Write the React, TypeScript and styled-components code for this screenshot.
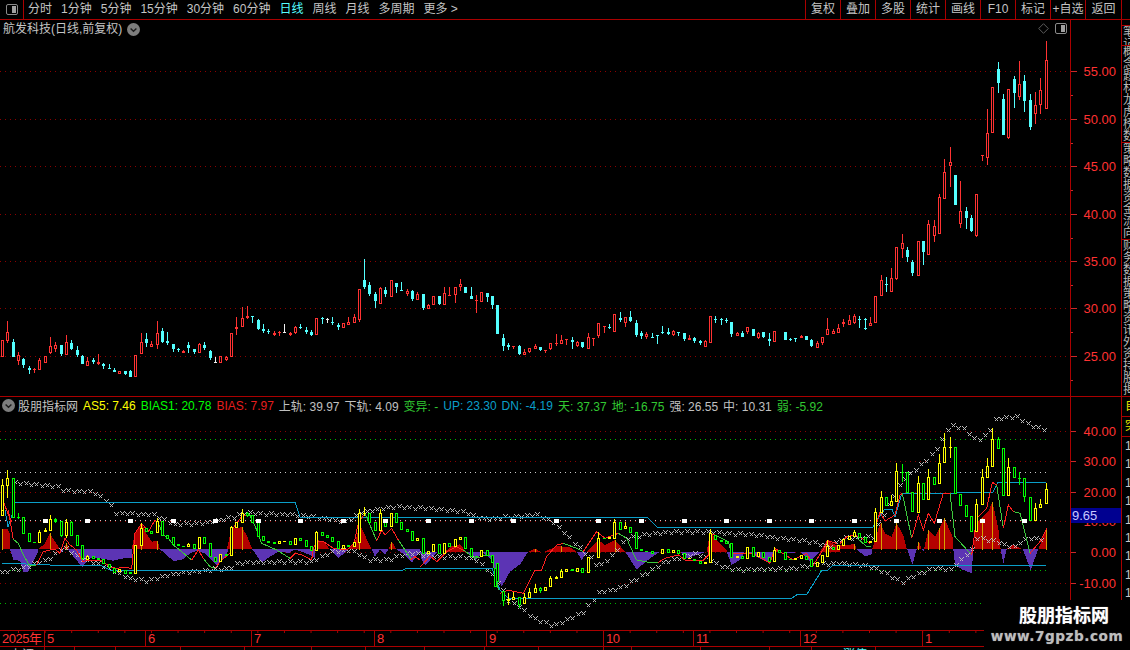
import React from "react";
import styled, { createGlobalStyle } from "styled-components";

const RED_LINE = "#aa0000";
const AXIS_RED = "#ff3232";

const Global = createGlobalStyle`
  html, body { margin: 0; padding: 0; background: #000; }
  body { font-family: "Liberation Sans", "Noto Sans CJK SC", sans-serif; font-size: 12px; color: #c0c0c0; }
`;

const Page = styled.div`
  position: relative;
  width: 1130px;
  height: 650px;
  background: #000;
  display: flex;
  flex-direction: column;
  overflow: hidden;
`;
const TopBar = styled.header`
  height: 19px;
  border-bottom: 1px solid ${RED_LINE};
  display: flex;
  align-items: center;
  flex: none;
`;
const PanelToggle = styled.div`
  width: 23px;
  height: 19px;
  border-right: 1px solid ${RED_LINE};
  display: flex;
  align-items: center;
  justify-content: center;
  flex: none;
`;
const Periods = styled.nav`
  display: flex;
  gap: 9px;
  padding-left: 4px;
  line-height: 19px;
`;
const Period = styled.span<{ $on?: boolean }>`
  color: ${(p) => (p.$on ? "#55ffff" : "#c4c4c4")};
  white-space: nowrap;
`;
const Tools = styled.div`
  display: flex;
  margin-left: auto;
  margin-right: 8px;
  border-right: 1px solid ${RED_LINE};
`;
const Tool = styled.div`
  width: 34px;
  height: 19px;
  line-height: 19px;
  text-align: center;
  border-left: 1px solid ${RED_LINE};
  color: #c4c4c4;
  white-space: nowrap;
  &:last-child { width: 35px; }
`;
const Main = styled.main`
  flex: 1;
  display: flex;
  min-height: 0;
`;
const ChartColumn = styled.section`
  width: 1070px;
  border-right: 1px solid ${RED_LINE};
  display: flex;
  flex-direction: column;
  flex: none;
`;
const Pane = styled.div<{ $h: number; $line?: boolean }>`
  position: relative;
  height: ${(p) => p.$h}px;
  flex: none;
  border-bottom: ${(p) => (p.$line ? `1px solid ${RED_LINE}` : "none")};
`;
const Drawing = styled.svg`
  display: block;
  width: 100%;
  height: 100%;
  shape-rendering: crispEdges;
`;
const AxisText = styled.text`
  font-family: "Liberation Sans", sans-serif;
  font-size: 13px;
  fill: ${AXIS_RED};
  text-anchor: end;
  shape-rendering: auto;
`;
const PaneTitle = styled.div`
  position: absolute;
  left: 3px;
  top: 1px;
  display: flex;
  align-items: center;
  gap: 5px;
  line-height: 17px;
  color: #c4c4c4;
`;
const Legend = styled.div`
  position: absolute;
  left: 2px;
  top: 0;
  display: flex;
  align-items: center;
  gap: 5px;
  height: 17px;
  white-space: nowrap;
`;
const LegendName = styled.span`
  color: #c4c4c4;
  margin-left: -2px;
`;
const LegendItem = styled.span<{ $c: string }>`
  color: ${(p) => p.$c};
`;
const CornerIcons = styled.div`
  position: absolute;
  right: 3px;
  top: 3px;
  display: flex;
  align-items: center;
  gap: 6px;
`;
const TimeAxis = styled.div`
  height: 15px;
  flex: none;
  display: flex;
  border-top: 1px solid ${RED_LINE};
  border-bottom: 1px solid ${RED_LINE};
  background-image: linear-gradient(90deg, ${RED_LINE} 1px, transparent 1px);
  background-size: 26.6px 2px;
  background-repeat: repeat-x;
  background-position: 18px 0;
`;
const TimeCell = styled.div<{ $w: number }>`
  width: ${(p) => p.$w}px;
  flex: none;
  padding-left: 2px;
  box-sizing: border-box;
  border-right: 1px solid ${RED_LINE};
  color: ${AXIS_RED};
  font-size: 13px;
  letter-spacing: -0.5px;
  line-height: 16px;
  white-space: nowrap;
`;
const StatusBar = styled.div`
  flex: 1;
  display: flex;
  overflow: hidden;
`;
const StatusCell = styled.div<{ $w: number; $c?: string }>`
  width: ${(p) => p.$w}px;
  flex: none;
  box-sizing: border-box;
  border-right: 1px solid ${RED_LINE};
  color: ${(p) => p.$c || "#c4c4c4"};
  text-align: ${(p) => (p.$c ? "right" : "center")};
  line-height: 14px;
  padding-top: 1px;
  padding-right: ${(p) => (p.$c ? "8px" : "0")};
  white-space: nowrap;
  overflow: hidden;
`;
const AxisColumn = styled.aside`
  width: 50px;
  flex: none;
  display: flex;
  flex-direction: column;
  border-right: 1px solid ${RED_LINE};
`;
const CurrentValue = styled.div`
  position: absolute;
  left: 0;
  right: 0;
  top: 111px;
  height: 15px;
  background: #000090;
  color: #c8c8ff;
  font-size: 13px;
  line-height: 15px;
  padding-left: 1px;
`;
const SideStrip = styled.aside`
  flex: 1;
  min-width: 0;
  overflow: hidden;
  display: flex;
  flex-direction: column;
`;
const StripSection = styled.div<{ $h: number; $line?: boolean }>`
  height: ${(p) => p.$h}px;
  flex: none;
  overflow: hidden;
  line-height: 12px;
  color: #b8b8b8;
  white-space: pre-line;
  padding-left: 1px;
  box-sizing: content-box;
  border-bottom: ${(p) => (p.$line ? `1px solid ${RED_LINE}` : "none")};
  margin-right: -8px;
  width: 20px;
`;
const StripBadge = styled.div`
  height: 19px;
  line-height: 19px;
  color: #e6e600;
  padding-left: 3px;
  width: 20px;
  border-bottom: 1px solid ${RED_LINE};
  flex: none;
`;
const StripRow = styled.div`
  height: 18.4px;
  line-height: 18.4px;
  width: 20px;
  padding-left: 3px;
  color: #c8c8c8;
  flex: none;
`;
const Watermark = styled.div`
  position: absolute;
  right: 0;
  bottom: 0;
  width: 146px;
  height: 50px;
  background: #000;
  display: flex;
  flex-direction: column;
  align-items: center;
  padding-top: 2px;
  box-sizing: border-box;
`;
const WatermarkTitle = styled.div`
  color: #fff;
  font: bold 18px/24px "Noto Sans CJK SC", sans-serif;
  margin-left: 14px;
  text-shadow: 0 0 1px #999;
`;
const WatermarkUrl = styled.div`
  color: #bdbdbd;
  font: bold 13.6px/20px "DejaVu Sans", sans-serif;
  letter-spacing: 0.55px;
  text-shadow: 0 0 1px #777;
  white-space: nowrap;
`;

/* ---------- icons ---------- */
const PanelIcon = () => (
  <svg width="12" height="11" viewBox="0 0 12 11">
    <rect x="0.5" y="0.5" width="11" height="10" rx="1.5" fill="#000" stroke="#8a8a8a" />
    <rect x="6" y="2" width="4" height="7" fill="#a0a0a0" />
  </svg>
);
const DiamondIcon = () => (
  <svg width="11" height="11" viewBox="0 0 11 11">
    <path d="M5.5 0.7 L10.3 5.5 L5.5 10.3 L0.7 5.5 Z" fill="none" stroke="#5c5c5c" />
  </svg>
);
const DownBadge = () => (
  <svg width="13" height="13" viewBox="0 0 13 13">
    <circle cx="6.5" cy="6.5" r="6.5" fill="#7d7d7d" />
    <path d="M3.6 5.4 L6.5 8.2 L9.4 5.4" fill="none" stroke="#1c1c1c" strokeWidth="1.4" />
  </svg>
);

/* ---------- chart data (read off the picture) ---------- */
type Candle = { x: number; h: number; t: number; b: number; l: number; k: string };

const parsePrice = (ox: number, oy: number, s: string): Candle[] =>
  s.trim().split(/\s*;\s*/).filter(Boolean).map((r) => {
    const [x, h, t, b, l, k] = r.trim().split(/\s+/);
    return { x: Math.floor(ox + +x / 3), h: oy + +h / 3, t: oy + +t / 3, b: oy + +b / 3, l: oy + +l / 3, k };
  });
const parseLower = (ox: number, oy: number, s: string): Candle[] =>
  s.trim().split(/\s*;\s*/).filter(Boolean).map((r) => {
    const [x, t, b, k, hi, lo] = r.trim().split(/\s+/);
    const tt = oy + +t / 3;
    const bb = oy + +b / 3;
    return { x: Math.floor(ox + +x / 3), t: tt, b: bb, k, h: hi ? oy + +hi / 3 : tt, l: lo ? oy + +lo / 3 : bb };
  });

const priceCandles: Candle[] = [
  ...parsePrice(0, 250, `7 270 270 320 320 r;22 213 247 273 278 r;40 267 277 320 320 c;55 307 316 332 345 r;70 323 327 345 353 c;88 348 354 360 372 c;103 354 357 358 370 r;118 325 331 359 359 r;136 319 319 338 338 r;151 262 289 309 312 r;166 277 286 297 305 r;184 285 286 312 318 c;199 255 277 315 315 r;214 270 279 297 300 c;232 289 300 316 320 c;247 315 318 342 342 c;262 321 334 347 347 r;280 324 330 337 342 c;295 312 337 342 345 r;310 338 342 348 357 c;328 342 355 356 358 c;343 354 360 366 366 c;358 364 364 371 371 r;376 363 364 371 375 c;391 361 363 381 381 c;406 316 316 380 380 r;424 249 277 311 311 r;439 250 267 279 291 c;454 274 283 290 290 r;472 213 250 284 296 r;487 235 243 276 279 c;502 246 274 280 285 c;520 282 282 297 306 c;535 294 297 300 306 c;550 300 304 308 308 r;565 277 285 294 309 c;583 297 297 306 312 c;598 280 283 309 309 r;613 277 285 294 300 c;631 299 303 324 330 c;646 321 335 335 335 w;661 319 319 338 338 r;679 318 321 330 333 r;694 250 250 322 322 r;709 202 232 236 255 r;727 171 205 230 230 r;742 168 199 205 207 r;757 198 199 202 219 c;775 208 210 236 240 c;790 222 237 244 249 c;805 237 242 245 252 c;823 243 249 254 258 r;838 244 245 250 257 r;853 222 245 245 246 w;871 246 250 254 258 r;886 229 232 250 251 r;901 222 230 232 237 c;919 232 240 246 252 c;934 240 246 254 258 c;949 205 205 254 254 r;967 201 204 206 222 c;982 205 207 207 219 w;997 201 217 219 226 c;1015 220 225 232 240 c;1030 220 220 233 233 r;1045 202 217 224 224 r;1063 193 202 218 218 r;1078 118 118 209 215 r;1093 27 91 110 116 c;1108 97 105 132 138 c;1126 126 132 152 174 c;1141 112 115 161 161 r;1156 111 120 132 140 c;1174 91 91 140 140 r;1189 99 99 110 129 c`),
  ...parsePrice(400, 250, `3 97 121 122 122 c;22 118 124 132 137 r;37 120 123 147 152 c;52 127 132 149 149 r;70 132 132 174 179 c;85 162 166 176 176 r;100 139 139 164 164 r;118 138 138 162 165 c;133 112 130 166 166 r;148 111 136 139 139 r;166 112 112 134 159 r;181 87 103 110 122 r;196 111 111 129 129 c;214 111 138 147 147 c;229 136 149 152 188 r;244 127 127 155 155 r;262 129 129 140 155 c;277 138 138 164 177 c;292 165 165 251 251 c;310 252 264 288 303 c;325 279 284 291 300 c;340 288 288 292 297 r;358 285 288 313 316 c;373 297 306 315 315 r;388 294 294 306 309 r;406 282 288 297 297 r;421 291 291 300 303 c;436 300 300 303 309 r;451 280 280 297 300 r;469 252 279 282 288 r;484 255 270 282 282 r;499 267 267 271 285 r;517 261 270 276 297 c;532 273 276 288 291 r;547 276 276 291 294 c;565 249 262 297 297 r;580 264 265 267 288 r;595 219 219 258 264 r;613 228 228 232 249 r;628 222 232 235 237 c;643 192 192 246 246 r;661 186 204 210 216 c;676 201 201 219 231 r;691 183 201 213 216 c;709 210 219 255 261 c;724 243 249 258 267 c;739 246 252 261 267 r;757 249 260 262 264 c;772 255 255 257 282 c;787 228 246 249 252 c;805 234 246 252 255 c;820 240 243 255 258 r;835 246 246 249 258 c;853 249 249 267 273 c;868 255 264 270 270 r;883 261 264 273 279 c;901 270 273 279 285 c;916 270 273 291 291 r;931 198 198 279 279 r;946 198 206 208 219 c;964 204 207 208 225 c;979 204 210 213 219 c;994 216 216 252 261 c;1012 246 249 258 258 r;1027 243 249 261 261 c;1042 231 231 246 252 r;1060 237 237 258 258 c;1075 246 249 264 267 r;1090 246 246 261 264 c;1108 249 267 273 288 c;1123 243 243 276 276 r;1156 246 246 270 270 c;1171 264 267 270 273 c;1186 264 265 266 276 c;1204 255 258 263 264 r;1219 258 258 270 270 c;1234 267 270 288 291 c;1252 273 279 293 293 r;1267 262 262 279 285 r;1282 204 237 255 255 r;1300 237 243 252 252 r;1315 222 234 249 249 r;1330 207 216 222 231 r;1348 195 210 225 225 r;1363 192 198 219 222 r;1378 198 207 210 234 c;1396 204 234 236 240 c;1411 201 219 228 228 r;1426 138 138 219 219 r`),
  ...parsePrice(860, 130, `16 565 568 570 598 c;31 560 578 587 587 r;64 435 451 497 497 r;79 441 462 464 486 c;94 414 445 485 485 r;109 351 351 448 450 r;127 312 340 358 384 r;142 352 360 381 396 c;157 391 396 429 438 c;175 334 334 437 437 r;190 334 334 366 405 c;205 270 282 375 375 r;223 270 289 317 336 r;238 192 202 311 311 r;253 87 127 206 206 r;271 51 97 107 171 r;286 135 135 225 225 c;301 153 244 281 294 r;319 231 243 264 297 c;334 255 264 303 306 c;349 192 192 318 321 r;367 75 75 75 93 r;382 -63 10 83 105 r`),
  ...parsePrice(760, 0, `697 262 262 399 399 r;715 186 207 250 278 c;730 282 297 405 405 c;745 268 268 414 417 r;763 228 237 278 323 c;778 183 253 292 300 r;793 226 243 302 335 c;811 283 300 381 390 c;826 276 315 343 372 r;841 235 270 316 342 r;859 123 181 328 328 r`),
];

const lowerCandles: Candle[] = [
  ...parseLower(0, 385, `7 300 390 y 283 390;22 280 302 y 256 340;40 280 399 g`),
  ...parseLower(0, 510, `7 0 18 y;55 22 23 g 8 28;70 22 72 g;88 70 97 g;103 96 100 G;118 66 100 y 60;136 60 67 y 55;151 28 62 y 15;166 27 35 G 25 40;184 34 78 g 32 80;199 37 77 y 28 85;214 36 78 g 33;232 76 107 g;247 106 148 g 105 150;262 138 150 y 135;280 139 147 g;295 145 150 G;310 148 163 g;328 163 174 g;343 174 188 g;358 178 187 y;376 181 192 g;391 187 193 G;406 106 192 y;424 55 107 y 38;439 55 65 g;454 64 72 g;472 34 70 y 25;487 34 77 g;502 76 87 g;520 82 105 g;535 102 109 g;550 108 110 G;565 101 110 y 98;583 103 116 g;598 81 117 y;613 82 102 g;631 100 142 g;646 142 156 g;661 133 155 y;679 131 137 g;694 52 138 y 47;709 37 54 y;727 8 38 y -3;742 8 18 g 5 22;757 16 38 g;775 37 82 g;790 79 93 g;805 92 99 g;823 97 101 G;838 94 101 y;853 92 96 Y;871 94 104 g;886 85 106 y 83;901 85 92 g;919 91 110 g;934 109 122 g;949 67 122 y 62;967 67 77 g;982 76 85 g;997 82 95 g;1015 94 118 g;1030 106 116 y;1045 106 110 G;1063 96 110 y;1078 8 100 y -2;1093 8 9 y -8 18;1108 10 40 g;1126 37 63 g;1141 8 62 y -2;1156 37 52 g;1174 8 50 y;1189 10 40 g;1204 37 60 g;1222 58 66 g;1237 64 93 g;1252 85 94 y`),
  ...parseLower(420, 510, `11 85 131 g;26 124 131 y;41 101 125 y;59 102 132 g;73 99 131 y;88 100 110 g;106 87 111 y;121 81 90 y;136 82 116 g;154 115 141 g;169 139 141 G;184 120 140 y;202 121 137 g;217 136 160 g;226 175 230 g;232 160 215 g;250 243 274 g 243 287;265 268 274 Y 250 285;280 262 271 y 245;298 262 285 g 262 295;313 262 281 y 250;328 247 263 y 235;346 234 248 y 222;361 234 243 g 230 250;376 232 242 y;391 205 232 y 198;409 202 208 y 198;424 184 203 y 178;439 178 185 y;457 178 184 G;472 175 185 y;487 175 190 g;505 141 188 y;535 83 143 y 65;553 84 88 G;568 82 88 Y;583 35 86 y 27;601 37 60 g;616 47 58 y 35;631 50 70 g;649 67 117 g;664 117 124 g;679 124 126 G;697 124 131 g;727 118 131 y;745 118 128 g;760 120 128 y;775 121 131 g;793 130 148 g;808 144 148 Y;823 146 154 g;841 152 163 g;856 156 163 y;871 68 158 y 56;886 74 91 g;904 90 97 G;919 94 102 g;934 100 143 g;952 139 143 Y;967 139 148 g;982 112 148 y;1000 112 140 g;1015 127 140 y;1030 127 143 g;1048 142 157 g;1063 120 156 y 112;1078 120 130 g;1096 127 151 g;1111 148 151 G;1126 145 151 Y;1144 135 148 y;1159 137 149 g;1174 148 172 g;1192 156 170 y;1207 136 158 y;1222 108 140 y 90;1240 110 119 g;1255 104 119 y`),
  ...parseLower(840, 395, `10 432 452 y;28 422 434 y;43 410 425 y 405;58 413 430 g;76 425 443 g;91 438 443 Y;106 350 440 y 338;124 307 353 y 288;139 307 333 g;154 318 333 y 300;169 228 320 y 205;187 230 232 g 208 262;202 232 295 g;217 292 352 g;235 265 353 y 243;250 265 315 g;265 247 315 y 222;283 247 270 g;298 205 268 y 178;313 157 205 y 115;331 155 157 Y 125 188;346 157 298 g;361 297 332 g;379 331 365 g;394 364 411 g;409 328 410 y 312;427 247 330 y 222;442 214 248 y 190;457 133 215 y 98;475 133 162 g 126;490 160 302 g;505 217 302 y 190;523 217 250 g;538 248 250 g 230 270;553 250 305 g 250 320;571 305 378 g;586 340 378 y 325;601 328 340 y 313;619 283 328 y 265`),
];

const pts = (ox: number, oy: number, s: string) =>
  s.trim().split(/\s+/).map((p) => {
    const [x, y] = p.split(",");
    return `${ox + +x / 3},${oy + +y / 3}`;
  }).join(" ");

const Z6 = (s: string) => pts(0, 510, s);
const Z7 = (s: string) => pts(420, 510, s);
const Z5 = (s: string) => pts(840, 395, s);

const redAreas = [
  Z6("6,118 6,57 22,57 30,70 30,118"),
  Z6("115,118 135,100 150,70 165,95 180,118"),
  Z6("190,118 200,100 208,118"),
  Z6("395,118 405,70 425,38 440,72 455,95 472,92 480,118"),
  Z6("680,118 695,55 725,52 740,75 757,118"),
  Z6("945,118 950,90 970,95 990,118"),
  Z6("1045,118 1065,95 1080,45 1115,118"),
  Z6("1165,118 1175,95 1190,118"),
  Z7("75,125 95,108 120,103 138,125"),
  Z7("325,125 345,116 362,125"),
  Z7("375,125 410,108 450,112 470,125"),
  Z7("500,125 535,90 555,105 585,90 615,125"),
  Z7("860,125 870,65 890,90 920,122 920,125"),
  Z7("1060,125 1068,115 1085,125"),
  Z7("1200,125 1222,92 1260,110 1260,125"),
  Z5("0,462 0,450 45,448 50,462"),
  Z5("97,462 120,385 135,415 155,425 170,385 190,420 200,462"),
  Z5("230,462 237,440 245,462"),
  Z5("252,462 265,405 285,425 313,370 340,430 340,462"),
  Z5("400,462 410,385 445,350 457,320 475,400 482,462"),
  Z5("500,462 520,448 545,462"),
  Z5("595,462 620,400 620,462"),
];
const purpleAreas = [
  Z6("30,118 40,150 60,152 70,185 85,185 95,165 112,130 115,118"),
  Z6("180,118 183,130 190,118"),
  Z6("205,118 220,140 248,172 265,145 300,145 340,152 370,145 395,145 395,118"),
  Z6("480,118 500,135 520,153 545,150 570,130 590,122 615,130 630,145 650,165 665,150 680,135 685,118"),
  Z6("757,118 785,158 810,140 835,125 850,125 865,130 885,118"),
  Z6("885,118 905,125 930,135 945,145 945,118"),
  Z6("990,118 1015,145 1045,118"),
  Z6("1115,118 1125,140 1140,118"),
  Z6("1140,118 1155,135 1165,118"),
  Z6("1190,118 1215,135 1235,158 1260,125 1260,118"),
  Z7("0,125 5,150 15,165 30,150 55,125 80,125"),
  Z7("140,125 165,150 190,128 215,150 225,190 245,230 270,185 300,163 325,125"),
  Z7("470,125 485,150 500,125"),
  Z7("615,125 650,178 690,145 720,125"),
  Z7("780,125 800,145 860,125"),
  Z7("920,125 935,165 960,150 975,125"),
  Z7("975,125 1000,135 1050,160 1060,125"),
  Z7("1085,125 1110,130 1140,125"),
  Z7("1140,125 1170,155 1200,125"),
  Z5("50,462 75,485 95,478 97,462"),
  Z5("202,462 217,510 230,462"),
  Z5("245,462 250,470 252,462"),
  Z5("340,462 345,510 370,525 395,535 400,462"),
  Z5("482,462 490,505 500,462"),
  Z5("548,462 572,525 595,462"),
];
const barMarks: [number, number, number][] = [
  ...[[7,57],[150,70],[198,100],[424,38],[472,92],[695,55],[727,52],[950,90],[1078,45],[1175,95]].map(
    ([x, y]) => [Math.floor(x / 3), 510 + y / 3, 549.5] as [number, number, number]),
  ...[[345,116],[425,108],[535,90],[585,90],[870,65],[1222,92]].map(
    ([x, y]) => [Math.floor(420 + x / 3), 510 + y / 3, 551.5] as [number, number, number]),
  ...[[43,448],[125,385],[169,385],[235,440],[265,405],[298,400],[313,370],[427,370],[457,320],[619,400]].map(
    ([x, y]) => [Math.floor(840 + x / 3), 395 + y / 3, 549.5] as [number, number, number]),
];
const redLines = [
  "3,500 8,514 12,522",
  Z6("25,0 35,60 40,88"),
  Z6("110,165 130,125 150,120 165,118 180,130 195,85 210,105 230,120 248,155 265,150 300,150 330,170 350,175 370,172 395,175 405,70 425,40 445,65 465,30 475,40"),
  Z6("575,150 595,120 612,148"),
  Z6("645,175 665,150 690,130 695,60 710,40 725,20 748,12"),
  Z6("870,145 885,130 905,135 935,150 940,115 950,95 970,95 1000,115 1040,120 1062,100 1075,40 1095,10"),
  Z6("1130,92 1145,60 1155,75 1175,55 1195,90"),
  Z6("1230,150 1245,140 1260,150"),
  Z7("0,172 30,138 50,155 80,125 110,110 130,120"),
  Z7("240,250 265,240 285,245 310,250 345,180 365,180 380,140 410,105 430,100"),
  Z7("490,125 530,65 555,85 595,70"),
  Z7("715,157 735,145 775,135 795,150 850,150 865,135 870,70 885,75"),
  Z7("940,130 1000,130 1050,160 1065,115 1080,125 1120,150 1160,130 1180,165 1215,110 1222,92 1250,100"),
  Z5("105,400 120,352 135,378 165,360 180,300 187,295"),
  Z5("215,430 235,360 250,405 265,355 283,385 310,295 330,295"),
  Z5("395,480 410,370 440,340 457,262 470,270"),
  Z5("490,400 505,330 520,350"),
  Z5("570,475 600,440 620,400"),
  Z5("0,445 20,425 45,420 65,430 90,445"),
];
const greenLines = [
  Z6("40,88 55,100 70,135 88,165 108,165"),
  Z6("475,40 490,75 505,85 520,105 545,125 575,150"),
  Z6("612,148 630,170 645,175"),
  Z6("748,12 770,60 785,100 830,120 870,145"),
  Z6("1095,10 1130,92"),
  Z6("1195,90 1235,150"),
  Z7("130,120 165,145 200,135 215,140 235,240"),
  Z7("430,100 470,115 490,125"),
  Z7("595,70 620,85 640,130 650,150 685,157 715,157"),
  Z7("885,75 925,95 935,130 960,130"),
  Z5("187,295 215,430"),
  Z5("330,295 345,425 395,480"),
  Z5("470,270 490,400"),
  Z5("520,350 540,355 570,475"),
  Z5("50,428 80,455 92,455"),
];
const blueUpper = "5,510 8,527 12,515 15,502 295,502 300,517 647,517 657,527 873,527 878,518 885,509 892,509 895,517 902,493 955,493 993,492 998,482 1046,482";
const blueLower = "2,563 50,565 100,565 110,570 403,570 407,568 492,568 495,577 500,590 508,598 792,598 798,594 807,594 822,570 828,570 833,565 1046,565";

const upperSeries: [number, number][] = [[15,483],[58,487],[65,491],[93,492],[102,498],[109,503],[115,513],[155,515],[175,525],[205,523],[233,517],[243,513],[297,515],[333,520],[345,522],[355,518],[358,513],[390,507],[421,508],[463,512],[487,520],[507,517],[537,515],[553,522],[580,548],[593,560],[598,567],[610,558],[627,538],[643,535],[670,532],[710,532],[753,535],[810,542],[830,547],[843,538],[873,537],[882,517],[903,480],[920,466],[930,457],[940,445],[945,434],[950,425],[963,428],[977,441],[987,435],[997,418],[1007,418],[1017,417],[1030,425],[1046,430]];
const lowerSeries: [number, number][] = [[2,573],[13,570],[28,567],[38,562],[47,560],[57,553],[63,547],[83,560],[97,563],[107,568],[128,578],[147,581],[167,575],[207,570],[230,568],[237,563],[283,562],[310,562],[333,552],[347,550],[358,553],[367,560],[387,560],[410,553],[440,557],[463,557],[477,560],[495,577],[508,600],[520,607],[533,618],[553,626],[567,620],[583,612],[593,600],[598,593],[620,588],[647,573],[663,563],[697,553],[723,567],[737,570],[790,569],[813,565],[840,563],[873,567],[882,572],[903,582],[920,573],[937,568],[950,570],[963,558],[973,549],[977,538],[997,542],[1013,548],[1020,542],[1030,538],[1046,540]];

const xMarks = (series: [number, number][]) => {
  let d = "";
  let i = 0;
  for (let x = series[0][0]; x <= series[series.length - 1][0]; x += 5.33, i++) {
    let s = 0;
    while (s < series.length - 2 && series[s + 1][0] < x) s++;
    const [x0, y0] = series[s];
    const [x1, y1] = series[s + 1];
    const y = y0 + ((y1 - y0) * (x - x0)) / Math.max(1, x1 - x0) + (i % 2 ? 0.8 : -0.8);
    const px = Math.round(x) + 0.5;
    const py = Math.round(y) + 0.5;
    d += `M${px - 2} ${py - 2}l4 4m-4 0l4 -4`;
  }
  return d;
};

const squares = [45, 87, 130, 173, 215, 258, 300, 343, 385, 428, 471, 513, 556, 598, 641, 684, 726, 769, 811, 854, 896, 939, 982, 1024];

const COLORS: Record<string, string> = { r: "#ff3232", c: "#54ffff", w: "#f0f0f0", y: "#ffff00", g: "#00ff00", Y: "#ffff00", G: "#00ff00" };
const HOLLOW = "rygw";

const CandleMark = ({ c }: { c: Candle }) => {
  const col = COLORS[c.k];
  const t = Math.round(c.t);
  const b = Math.max(Math.round(c.b), t + 1);
  const hi = Math.round(c.h);
  const lo = Math.round(c.l);
  const hollow = HOLLOW.includes(c.k) && b - t > 2;
  return (
    <g fill={col}>
      {hi < t && <rect x={c.x} y={hi} width={1} height={t - hi} />}
      {lo > b && <rect x={c.x} y={b} width={1} height={lo - b} />}
      <rect x={c.x - 1} y={t} width={3} height={b - t} />
      {hollow && <rect x={c.x} y={t + 1} width={1} height={b - t - 2} fill="#000" />}
    </g>
  );
};

const GridLine = ({ y, color, to = 1070 }: { y: number; color: string; to?: number }) => (
  <line x1={0} x2={to} y1={y + 0.5} y2={y + 0.5} stroke={color} strokeDasharray="1 4" />
);

const PRICE_LEVELS: [number, string][] = [[71, "55.00"], [119, "50.00"], [166, "45.00"], [214, "40.00"], [261, "35.00"], [308, "30.00"], [356, "25.00"]];
const LOWER_LEVELS: [number, string][] = [[431, "40.00"], [461, "30.00"], [492, "20.00"], [521, "10.00"], [552, "0.00"], [583, "-10.00"]];

const PriceDrawing = () => (
  <Drawing viewBox="0 20 1070 376" preserveAspectRatio="none">
    {PRICE_LEVELS.map(([y]) => <GridLine key={y} y={y} color="#8c0000" />)}
    {priceCandles.map((c, i) => <CandleMark key={i} c={c} />)}
  </Drawing>
);

const LowerDrawing = () => (
  <Drawing viewBox="0 397 1070 233" preserveAspectRatio="none">
    {LOWER_LEVELS.map(([y]) => <GridLine key={y} y={y} color="#8c0000" />)}
    <GridLine y={439} color="#00b400" to={1046} />
    <GridLine y={570} color="#00b400" to={1046} />
    <GridLine y={603} color="#00b400" to={1046} />
    <GridLine y={472} color="#c8c8c8" to={1046} />
    <GridLine y={520} color="#c8c8c8" to={1046} />
    {redAreas.map((p, i) => <polygon key={i} points={p} fill="#b40000" />)}
    {purpleAreas.map((p, i) => <polygon key={i} points={p} fill="#5c34b4" />)}
    {barMarks.map(([x, y0, y1], i) => <rect key={i} x={x} y={y0} width={1} height={y1 - y0} fill="#d8a000" />)}
    <path d={xMarks(upperSeries)} stroke="#bcbcbc" fill="none" />
    <path d={xMarks(lowerSeries)} stroke="#bcbcbc" fill="none" />
    <polyline points={blueUpper} fill="none" stroke="#0a9ec8" />
    <polyline points={blueLower} fill="none" stroke="#0a9ec8" />
    {greenLines.map((p, i) => <polyline key={i} points={p} fill="none" stroke="#3cc83c" />)}
    {redLines.map((p, i) => <polyline key={i} points={p} fill="none" stroke="#ff2020" />)}
    {lowerCandles.map((c, i) => <CandleMark key={i} c={c} />)}
    {squares.map((x) => <rect key={x} x={x - 2} y={519} width={5} height={4} fill="#fff" />)}
  </Drawing>
);

const PriceAxis = () => (
  <Drawing viewBox="1071 20 50 376" preserveAspectRatio="none">
    {PRICE_LEVELS.map(([y, t]) => (
      <g key={y}>
        <rect x={1071} y={y} width={6} height={1} fill={AXIS_RED} opacity={0.8} />
        <rect x={1071} y={y + 24} width={2} height={1} fill={AXIS_RED} opacity={0.8} />
        <AxisText x={1116} y={y + 5}>{t}</AxisText>
      </g>
    ))}
  </Drawing>
);
const LowerAxis = () => (
  <Drawing viewBox="1071 397 50 233" preserveAspectRatio="none">
    {LOWER_LEVELS.map(([y, t]) => (
      <g key={y}>
        <rect x={1071} y={y} width={5} height={1} fill={AXIS_RED} opacity={0.8} />
        <AxisText x={1116} y={y + 5}>{t}</AxisText>
      </g>
    ))}
  </Drawing>
);

const PERIODS = ["分时", "1分钟", "5分钟", "15分钟", "30分钟", "60分钟", "日线", "周线", "月线", "多周期", "更多 >"];
const TOOLS = ["复权", "叠加", "多股", "统计", "画线", "F10", "标记", "+自选", "返回"];
const LEGEND: [string, string][] = [
  ["AS5: 7.46", "#ffff00"], ["BIAS1: 20.78", "#00ff00"], ["BIAS: 7.97", "#e61e1e"],
  ["上轨: 39.97", "#c0c0c0"], ["下轨: 4.09", "#c0c0c0"], ["变异: -", "#32c832"],
  ["UP: 23.30", "#0a9ec8"], ["DN: -4.19", "#0a9ec8"], ["天: 37.37", "#32c832"],
  ["地: -16.75", "#32c832"], ["强: 26.55", "#c0c0c0"], ["中: 10.31", "#c0c0c0"], ["弱: -5.92", "#32c832"],
];
const TIME_CELLS: [number, string][] = [[45, "2025年"], [101, "5"], [106, "6"], [123, "7"], [112, "8"], [117, "9"], [90, "10"], [107, "11"], [122, "12"], [147, "1"]];
const STATUS: [number, string, string?][] = [[45, "上证"], [30, "·"], [41, ""], [65, ""], [64, ""], [67, ""], [54, ""], [59, ""], [60, ""], [54, ""], [65, ""], [28, ""], [69, ""], [69, ""], [42, ""], [64, "涨停", "#55ffff"], [200, ""]];

const STRIP_A = "笔记";
const STRIP_B = "概\n念\n题\n材\n龙\n虎\n榜\n数";
const STRIP_C = "策\n略\n数\n据\n资\n金\n流\n向";
const STRIP_D = "财\n务\n数\n据\n策\n略\n资\n讯\n外\n资\n持\n股\n揭\n示\n收";

export default function App() {
  return (
    <Page>
      <Global />
      <TopBar>
        <PanelToggle><PanelIcon /></PanelToggle>
        <Periods>
          {PERIODS.map((p) => <Period key={p} $on={p === "日线"}>{p}</Period>)}
        </Periods>
        <Tools>
          {TOOLS.map((t) => <Tool key={t}>{t}</Tool>)}
        </Tools>
      </TopBar>
      <Main>
        <ChartColumn>
          <Pane $h={376} $line>
            <PriceDrawing />
            <PaneTitle>航发科技(日线,前复权)<DownBadge /></PaneTitle>
            <CornerIcons><DiamondIcon /><PanelIcon /></CornerIcons>
          </Pane>
          <Pane $h={233}>
            <LowerDrawing />
            <Legend>
              <DownBadge />
              <LegendName>股朋指标网</LegendName>
              {LEGEND.map(([t, c]) => <LegendItem key={t} $c={c}>{t}</LegendItem>)}
            </Legend>
          </Pane>
          <TimeAxis>
            {TIME_CELLS.map(([w, t], i) => <TimeCell key={i} $w={w}>{t}</TimeCell>)}
          </TimeAxis>
          <StatusBar>
            {STATUS.map(([w, t, c], i) => <StatusCell key={i} $w={w} $c={c}>{t}</StatusCell>)}
          </StatusBar>
        </ChartColumn>
        <AxisColumn>
          <Pane $h={376} $line><PriceAxis /></Pane>
          <Pane $h={233}>
            <LowerAxis />
            <CurrentValue>9.65</CurrentValue>
          </Pane>
        </AxisColumn>
        <SideStrip>
          <StripSection $h={5} $line />
          <StripSection $h={19} $line>{STRIP_A}</StripSection>
          <StripSection $h={96} $line>{STRIP_B}</StripSection>
          <StripSection $h={96} $line>{STRIP_C}</StripSection>
          <StripSection $h={156} $line>{STRIP_D}</StripSection>
          <StripBadge>自</StripBadge>
          <StripBadge>突</StripBadge>
          {[0, 1, 2, 3, 4, 5, 6, 7, 8].map((i) => <StripRow key={i}>1</StripRow>)}
        </SideStrip>
      </Main>
      <Watermark>
        <WatermarkTitle>股朋指标网</WatermarkTitle>
        <WatermarkUrl>www.7gpzb.com</WatermarkUrl>
      </Watermark>
    </Page>
  );
}
